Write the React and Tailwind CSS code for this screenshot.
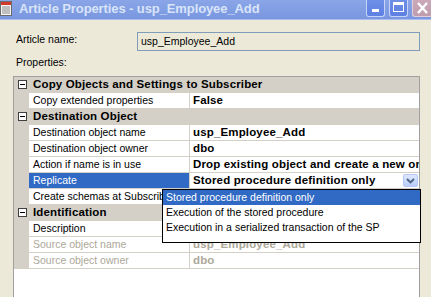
import React from "react";

const Minus = () => (
  <div className="w-[9px] h-[9px] border border-[#404040] bg-white flex items-center justify-center">
    <div className="w-[5px] h-[1px] bg-black" />
  </div>
);

function Category({ title }) {
  return (
    <div className="h-[16px] flex items-center bg-[#d4d0c8] border-b border-[#d4d0c8]">
      <div className="w-[15px] flex justify-center pl-[1px]">
        <Minus />
      </div>
      <div className="pl-[4px] font-bold text-[11.5px] tracking-[0.15px] leading-none text-black whitespace-nowrap">{title}</div>
    </div>
  );
}

function Prop({ label, value, selected, gray, children }) {
  return (
    <div className="h-[16px] flex">
      <div className="w-[15px] shrink-0 bg-[#d4d0c8]" />
      <div
        className={
          "w-[161px] shrink-0 border-b border-r border-[#d4d0c8] flex items-center pl-[4px] text-[10.5px] leading-none whitespace-nowrap overflow-hidden " +
          (selected ? "bg-[#316ac5] text-white" : "bg-white " + (gray ? "text-[#aca899]" : "text-black"))
        }
      >
        {label}
      </div>
      <div
        className={
          "flex-1 min-w-0 border-b border-[#d4d0c8] bg-white flex items-center pl-[3px] font-bold text-[11.5px] tracking-[0.15px] leading-none whitespace-nowrap overflow-hidden relative " +
          (gray ? "text-[#aca899]" : "text-black")
        }
      >
        {value}
        {children}
      </div>
    </div>
  );
}

export default function App() {
  return (
    <div className="w-[431px] h-[297px] overflow-hidden bg-[#ece9d8] flex flex-col font-['Liberation_Sans',Arial,sans-serif] relative">
      {/* Title bar */}
      <div className="h-[20px] shrink-0 flex items-start bg-gradient-to-b from-[#8aa6e8] to-[#7a96df] border-b border-[#a9bdf0] relative">
        <svg width="13" height="16" viewBox="0 0 13 16" className="mt-[1px]">
          <rect x="0.5" y="0.5" width="11" height="14" fill="#f4f4f4" stroke="#6b6b6b" />
          <rect x="1" y="1" width="10" height="3" fill="#d23b2b" />
          <line x1="2" y1="6" x2="10" y2="6" stroke="#8a8a8a" />
          <line x1="2" y1="8" x2="10" y2="8" stroke="#8a8a8a" />
          <line x1="2" y1="10" x2="10" y2="10" stroke="#8a8a8a" />
          <line x1="2" y1="12" x2="10" y2="12" stroke="#8a8a8a" />
        </svg>
        <div className="ml-[6px] mt-[1px] text-[13px] leading-[16px] font-bold text-[#d8e4f8] whitespace-nowrap tracking-[-0.1px]">
          Article Properties - usp_Employee_Add
        </div>
        <div className="ml-auto flex gap-[4px] items-start">
          <div className="w-[19px] h-[17px] rounded-b-[3px] border border-[#c6d4f7] border-t-0 bg-gradient-to-b from-[#6e90e8] to-[#5d80e2] flex items-end justify-start pl-[5px] pb-[4px]">
            <div className="w-[7px] h-[3px] bg-white" />
          </div>
          <div className="w-[19px] h-[17px] rounded-b-[3px] border border-[#c6d4f7] border-t-0 bg-gradient-to-b from-[#6e90e8] to-[#5d80e2] flex items-start justify-center pt-[2px]">
            <div className="w-[11px] h-[10px] border border-white border-t-[3px]" />
          </div>
          <div className="w-[19px] h-[17px] rounded-bl-[3px] border border-r-0 border-[#e0cfd8] border-t-0 bg-gradient-to-b from-[#cba9b8] to-[#bf9cae] flex items-start pl-[3px] pt-[2px]">
            <svg width="13" height="12" viewBox="0 0 13 12">
              <path d="M2 1 L11 11 M11 1 L2 11" stroke="white" strokeWidth="2.4" />
            </svg>
          </div>
        </div>
      </div>

      {/* Body */}
      <div className="flex-1 flex flex-col pl-[13px] pr-[11px]">
        <div className="mt-[12px] h-[19px] flex items-center">
          <div className="w-[124px] pl-[3px] text-[10.5px] leading-none text-black -mt-[4px]">Article name:</div>
          <div className="flex-1 h-[19px] border border-[#7f9db9] bg-[#ece9d8] flex items-center pl-[3px] text-[10.5px] leading-none text-black">
            usp_Employee_Add
          </div>
        </div>
        <div className="mt-[6px] h-[13px] pl-[3px] text-[10.5px] leading-none text-black">Properties:</div>

        <div className="mt-[6px] flex-1 border border-b-0 border-[#a0a0a0] bg-white relative">
          <Category title="Copy Objects and Settings to Subscriber" />
          <Prop label="Copy extended properties" value="False" />
          <Category title="Destination Object" />
          <Prop label="Destination object name" value="usp_Employee_Add" />
          <Prop label="Destination object owner" value="dbo" />
          <Prop label="Action if name is in use" value="Drop existing object and create a new one" />
          <Prop label="Replicate" value="Stored procedure definition only" selected>
            <div className="absolute right-[1px] top-[1px] w-[15px] h-[13px] rounded-[2px] border border-[#b3c7f2] bg-gradient-to-b from-[#dfe8fd] to-[#b8cdf9] flex items-center justify-center">
              <svg width="9" height="6" viewBox="0 0 9 6">
                <path d="M1 1 L4.5 4.5 L8 1" stroke="#4d6185" strokeWidth="1.8" fill="none" />
              </svg>
            </div>
          </Prop>
          <Prop label="Create schemas at Subscriber" value="" />
          <Category title="Identification" />
          <Prop label="Description" value="" />
          <Prop label="Source object name" value="usp_Employee_Add" gray />
          <Prop label="Source object owner" value="dbo" gray />

          {/* Dropdown list */}
          <div className="absolute left-[148px] top-[112px] w-[259px] h-[54px] border border-black bg-white flex flex-col">
            <div className="h-[15px] bg-[#316ac5] text-white text-[10.5px] leading-none flex items-center pl-[3px] whitespace-nowrap">
              Stored procedure definition only
            </div>
            <div className="h-[15px] text-black text-[10.5px] leading-none flex items-center pl-[3px] whitespace-nowrap">
              Execution of the stored procedure
            </div>
            <div className="h-[15px] text-black text-[10.5px] leading-none flex items-center pl-[3px] whitespace-nowrap">
              Execution in a serialized transaction of the SP
            </div>
          </div>
        </div>
      </div>
    </div>
  );
}
